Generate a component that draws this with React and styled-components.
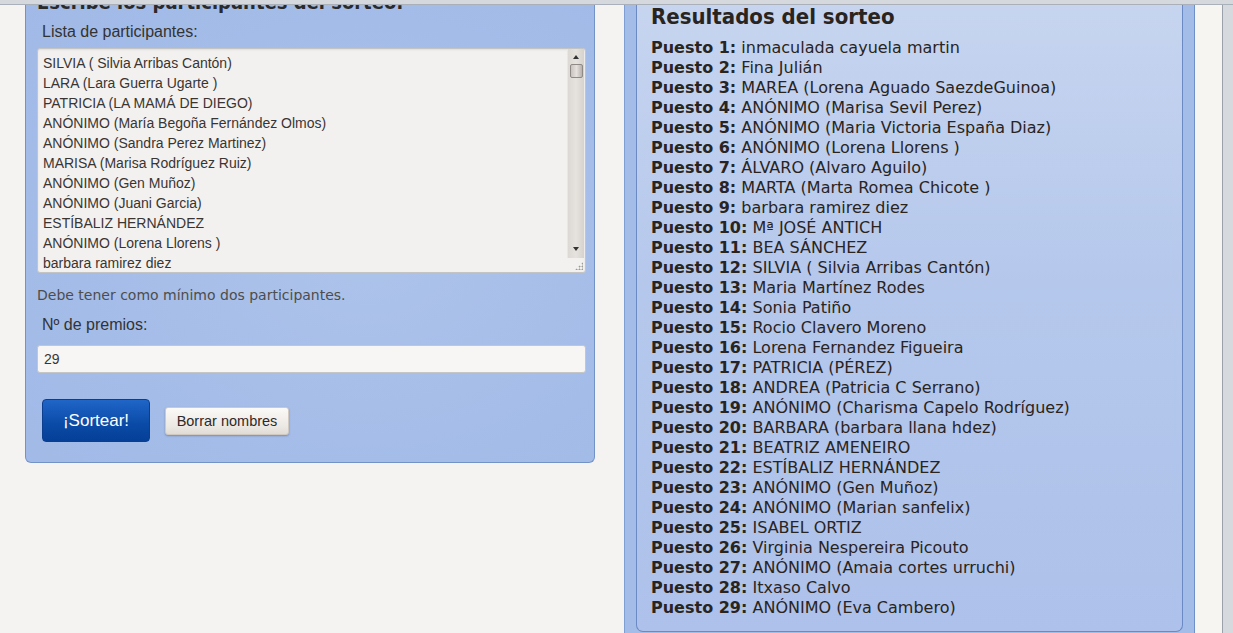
import React from 'react';
import styled, { createGlobalStyle } from 'styled-components';

const GlobalStyle = createGlobalStyle`
  html, body {
    margin: 0;
    padding: 0;
    background: #f4f3f1;
    overflow: hidden;
  }
`;

const Viewport = styled.div`
  position: relative;
  width: 1233px;
  height: 633px;
  overflow: hidden;
  background: #f4f3f1;
`;

const TopBar = styled.div`
  position: absolute;
  top: 0;
  left: 0;
  right: 0;
  height: 4px;
  background: #d5d8dc;
  border-bottom: 1px solid #a9b0b9;
  z-index: 5;
`;

const Page = styled.div`
  display: flex;
  align-items: flex-start;
  padding-left: 25px;
`;

const LeftPanel = styled.div`
  width: 570px;
  box-sizing: border-box;
  margin-top: -16px;
  margin-right: 29px;
  padding: 6px 8px 20px 11px;
  background: radial-gradient(ellipse at 60% 55%, #adc3ea 0%, #a4bce8 60%, #a0b9e6 100%);
  border: 1px solid #7393c7;
  border-top: none;
  border-radius: 0 0 6px 6px;
  font-family: 'Liberation Sans', Arial, sans-serif;
  color: #333;
`;

const PanelTitle = styled.h2`
  margin: 0 0 9px;
  font-family: 'DejaVu Sans Condensed', 'DejaVu Sans', sans-serif;
  font-size: 20px;
  line-height: 24px;
  font-weight: bold;
  color: #2a2a2a;
`;

const FieldLabel = styled.div`
  padding-left: 5px;
  font-size: 16px;
  line-height: 18px;
  color: #333;
  margin-bottom: ${p => p.$gap}px;
`;

const ListBox = styled.div`
  position: relative;
  display: flex;
  height: 225px;
  box-sizing: border-box;
  background: #f2f1ef;
  border: 1px solid #c4c4c4;
  border-radius: 3px;
  box-shadow: inset 0 1px 2px rgba(0, 0, 0, 0.08);
  overflow: hidden;
`;

const Lines = styled.div`
  flex: 1;
  padding: 4px 0 0 5px;
  font-size: 14px;
  line-height: 20px;
  color: #3a3532;
`;

const Line = styled.div`
  white-space: nowrap;
`;

const ScrollTrack = styled.div`
  width: 16px;
  height: 209px;
  margin-right: 1px;
  display: flex;
  flex-direction: column;
  align-items: center;
  background: linear-gradient(to right, #dcd9d4, #e6e3df, #d6d3ce);
  border-left: 1px solid #e9e7e3;
`;

const Arrow = styled.div`
  width: 0;
  height: 0;
  border-left: 3px solid transparent;
  border-right: 3px solid transparent;
  ${p => (p.$up ? 'border-bottom: 4px solid #333;' : 'border-top: 4px solid #333;')}
  margin: ${p => (p.$up ? '6px 0 5px' : 'auto 0 7px')};
`;

const Thumb = styled.div`
  width: 13px;
  height: 14px;
  box-sizing: border-box;
  border: 1px solid #8f8a86;
  border-radius: 2px;
  background: linear-gradient(to right, #c9c3bf, #e6e1dd, #b8b1ac);
`;

const Grip = styled.div`
  position: absolute;
  right: 2px;
  bottom: 2px;
  width: 8px;
  height: 8px;
  background-image: radial-gradient(circle, #9a9a9a 0.9px, transparent 1.1px);
  background-size: 3px 3px;
  clip-path: polygon(100% 0, 100% 100%, 0 100%);
`;

const Hint = styled.div`
  margin: 13px 0 12px;
  font-family: 'DejaVu Sans', Verdana, sans-serif;
  font-size: 14px;
  line-height: 18px;
  color: #4d4d4d;
`;

const TextInput = styled.div`
  height: 28px;
  box-sizing: border-box;
  padding: 0 6px;
  display: flex;
  align-items: center;
  background: #f7f6f4;
  border: 1px solid #c6c6c6;
  border-radius: 3px;
  font-size: 14px;
  color: #3a3532;
`;

const ButtonRow = styled.div`
  display: flex;
  align-items: center;
  gap: 15px;
  margin-top: 26px;
  padding-left: 5px;
`;

const PrimaryButton = styled.button`
  width: 108px;
  height: 43px;
  border: 1px solid #0b3e8f;
  border-radius: 4px;
  background: linear-gradient(#1f66c8, #0a4aa6 60%, #053f97);
  color: #fff;
  font-family: 'Liberation Sans', Arial, sans-serif;
  font-size: 17px;
  cursor: pointer;
`;

const SecondaryButton = styled.button`
  width: 124px;
  height: 28px;
  border: 1px solid #cfc9c2;
  border-radius: 3px;
  background: linear-gradient(#fbfaf8, #ece8e3 70%, #e0dbd5);
  box-shadow: 0 1px 2px rgba(0, 0, 0, 0.25);
  color: #2e2a27;
  font-family: 'Liberation Sans', Arial, sans-serif;
  font-size: 14.5px;
  cursor: pointer;
`;

const RightPanel = styled.div`
  width: 571px;
  box-sizing: border-box;
  margin-top: -10px;
  padding: 5px 11px 12px 11px;
  background: #a3bde8;
  border-left: 1px solid #7f9ed2;
  border-right: 1px solid #6f8fc6;
`;

const ResultsBox = styled.div`
  padding: 8px 10px 13px 14px;
  background: linear-gradient(#c7d5ef, #b5c8ec 45%, #adc1ea);
  border: 1px solid #6b8ac3;
  border-top: none;
  border-radius: 0 0 7px 7px;
  font-family: 'DejaVu Sans', Verdana, sans-serif;
  color: #2a2420;
`;

const ResultsTitle = styled.h2`
  margin: 0 0 7px;
  font-family: 'DejaVu Sans Condensed', 'DejaVu Sans', sans-serif;
  font-size: 22px;
  line-height: 28px;
  font-weight: bold;
`;

const ResultRow = styled.div`
  font-size: 16px;
  line-height: 20px;
  white-space: nowrap;
`;

const Place = styled.b`
  font-weight: bold;
`;

const SideGap = styled.div`
  width: 27px;
  height: 633px;
  background: #f6f5f2;
`;

const SideRail = styled.div`
  flex: 1;
  height: 633px;
  background: #d6d9dd;
  border-left: 1px solid #9aa1aa;
`;

const participants = [
  'SILVIA ( Silvia Arribas Cantón)',
  'LARA (Lara Guerra Ugarte )',
  'PATRICIA (LA MAMÁ DE DIEGO)',
  'ANÓNIMO (María Begoña Fernández Olmos)',
  'ANÓNIMO (Sandra Perez Martinez)',
  'MARISA (Marisa Rodríguez Ruiz)',
  'ANÓNIMO (Gen Muñoz)',
  'ANÓNIMO (Juani Garcia)',
  'ESTÍBALIZ HERNÁNDEZ',
  'ANÓNIMO (Lorena Llorens )',
  'barbara ramirez diez',
];

const results = [
  'inmaculada cayuela martin',
  'Fina Julián',
  'MAREA (Lorena Aguado SaezdeGuinoa)',
  'ANÓNIMO (Marisa Sevil Perez)',
  'ANÓNIMO (Maria Victoria España Diaz)',
  'ANÓNIMO (Lorena Llorens )',
  'ÁLVARO (Alvaro Aguilo)',
  'MARTA (Marta Romea Chicote )',
  'barbara ramirez diez',
  'Mª JOSÉ ANTICH',
  'BEA SÁNCHEZ',
  'SILVIA ( Silvia Arribas Cantón)',
  'Maria Martínez Rodes',
  'Sonia Patiño',
  'Rocio Clavero Moreno',
  'Lorena Fernandez Figueira',
  'PATRICIA (PÉREZ)',
  'ANDREA (Patricia C Serrano)',
  'ANÓNIMO (Charisma Capelo Rodríguez)',
  'BARBARA (barbara llana hdez)',
  'BEATRIZ AMENEIRO',
  'ESTÍBALIZ HERNÁNDEZ',
  'ANÓNIMO (Gen Muñoz)',
  'ANÓNIMO (Marian sanfelix)',
  'ISABEL ORTIZ',
  'Virginia Nespereira Picouto',
  'ANÓNIMO (Amaia cortes urruchi)',
  'Itxaso Calvo',
  'ANÓNIMO (Eva Cambero)',
];

const App = () => {
  return (
    <Viewport>
      <GlobalStyle />
      <TopBar />
      <Page>
        <LeftPanel>
          <PanelTitle>Escribe los participantes del sorteo:</PanelTitle>
          <FieldLabel $gap={7}>Lista de participantes:</FieldLabel>
          <ListBox>
            <Lines>
              {participants.map((p, i) => (
                <Line key={i}>{p}</Line>
              ))}
            </Lines>
            <ScrollTrack>
              <Arrow $up />
              <Thumb />
              <Arrow />
            </ScrollTrack>
            <Grip />
          </ListBox>
          <Hint>Debe tener como mínimo dos participantes.</Hint>
          <FieldLabel $gap={11}>Nº de premios:</FieldLabel>
          <TextInput>29</TextInput>
          <ButtonRow>
            <PrimaryButton>¡Sortear!</PrimaryButton>
            <SecondaryButton>Borrar nombres</SecondaryButton>
          </ButtonRow>
        </LeftPanel>
        <RightPanel>
          <ResultsBox>
            <ResultsTitle>Resultados del sorteo</ResultsTitle>
            {results.map((r, i) => (
              <ResultRow key={i}>
                <Place>Puesto {i + 1}:</Place> {r}
              </ResultRow>
            ))}
          </ResultsBox>
        </RightPanel>
        <SideGap />
        <SideRail />
      </Page>
    </Viewport>
  );
};

export default App;
